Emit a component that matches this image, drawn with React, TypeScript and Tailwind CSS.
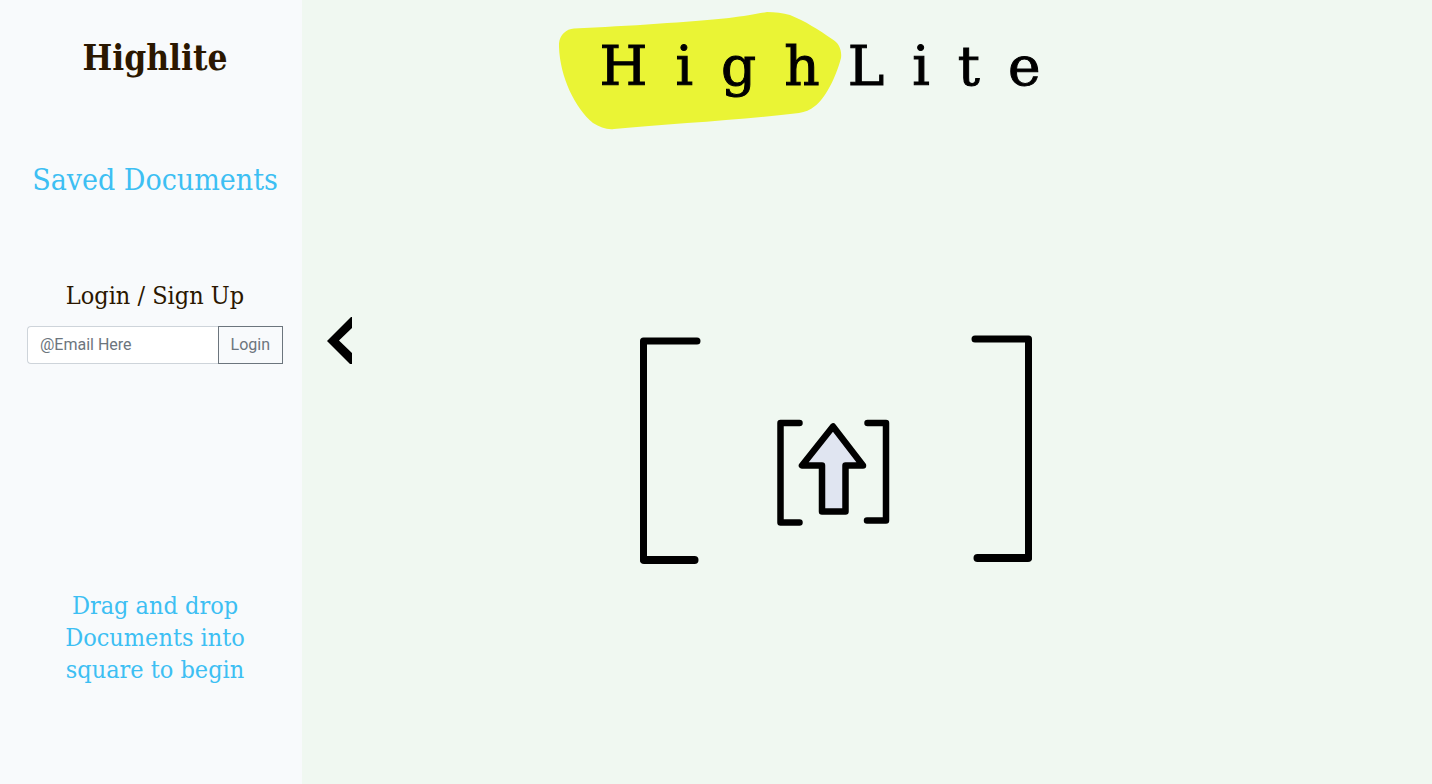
import { useState } from "react";

const letters = ["H", "i", "g", "h", "L", "i", "t", "e"];

function Logo() {
  return (
    <div className="relative h-[118px] w-[487px] pt-[27px]" aria-label="HighLite">
      <svg
        className="absolute inset-0 h-full w-full"
        viewBox="0 0 487 118"
        aria-hidden="true"
      >
        <path
          d="M15 16.5C70 14 130 10 170 6C186 4 198 1.500 208 0C216 0 224 1 231 3C246 9 260 18 273 27C280 31 283 38 282 46C277 66 265 88 256 94C251 98 246 100 240 101C185 108 110 112 55 117C48 118 41 115 34 111C16 96 1 65 0 35C-1 25 6 17 15 16.5Z"
          fill="#eaf435"
        />
      </svg>
      <div className="relative flex gap-7 pl-[41px] font-['DejaVu_Serif',serif] text-[55px] leading-none text-black [-webkit-text-stroke:1px_#000]">
        {letters.map((letter, index) => (
          <span key={index}>{letter}</span>
        ))}
      </div>
    </div>
  );
}

function UploadTarget() {
  return (
    <svg
      className="h-[232px] w-[394px]"
      viewBox="0 0 394 232"
      fill="none"
      stroke="#000"
      strokeWidth="7"
      strokeLinecap="round"
      strokeLinejoin="round"
      role="img"
      aria-label="Drop documents here"
    >
      <path d="M58 7H4.500V225.500" />
      <path d="M5 226H55.500" strokeWidth="8" />
      <path d="M336 5H389.500V223.500" />
      <path d="M338.500 224H389" strokeWidth="8" />
      <path d="M160.500 89H141.500V188.500H160.500" strokeWidth="6.500" />
      <path d="M228.500 89H247V186.500H228" strokeWidth="6.500" />
      <path
        d="M194 92.500L163 131.500H183V177.500H206.500V131.500H224Z"
        fill="#e0e5f1"
        strokeWidth="6.500"
      />
    </svg>
  );
}

export default function App() {
  const [email, setEmail] = useState("");
  const [open, setOpen] = useState(true);

  return (
    <div className="flex min-h-screen bg-[#f0f8f1]">
      {open && (
        <aside className="w-[302px] shrink-0 bg-[#f8fafc] pr-[19px] pl-[27px] text-center font-['DejaVu_Serif_Condensed','DejaVu_Serif',serif] text-[#2b1700]">
          <h1 className="pt-9 text-[35px] leading-[44px] font-bold">Highlite</h1>
          <h2 className="mt-20 text-[30px] leading-10 whitespace-nowrap text-[#3dbff3]">
            Saved Documents
          </h2>
          <h3 className="mt-20 text-[25px] leading-8">Login / Sign Up</h3>
          <form
            className="mt-[14px] flex h-[38px] font-[Roboto,sans-serif] text-base"
            onSubmit={(event) => event.preventDefault()}
          >
            <input
              type="email"
              aria-label="Email"
              placeholder="@Email Here"
              value={email}
              onChange={(event) => setEmail(event.target.value)}
              className="min-w-0 flex-1 rounded-l border border-r-0 border-[#ced4da] bg-white px-3 text-[#495057] outline-none placeholder:text-[#6c757d]"
            />
            <button type="submit" className="border border-[#6c757d] px-3 text-[#6c757d]">
              Login
            </button>
          </form>
          <p className="mt-[226px] px-6 text-[25px] leading-8 text-[#3dbff3]">
            Drag and drop Documents into square to begin
          </p>
        </aside>
      )}
      <main className="min-w-0 flex-1">
        <header className="flex justify-center pt-3 pr-[130px]">
          <Logo />
        </header>
        <div className="mt-[187px] flex items-start pl-[25px]">
          <button
            type="button"
            aria-label="Toggle sidebar"
            aria-expanded={open}
            onClick={() => setOpen(!open)}
          >
            <svg className="h-[47px] w-[25px]" viewBox="0 0 25 47" aria-hidden="true">
              <path d="M25 0V11L12 23.500L25 36V47H23L0 24L24 0Z" />
            </svg>
          </button>
          <div className="flex flex-1 justify-center pt-[17px] pr-[112px]">
            <UploadTarget />
          </div>
        </div>
      </main>
    </div>
  );
}
